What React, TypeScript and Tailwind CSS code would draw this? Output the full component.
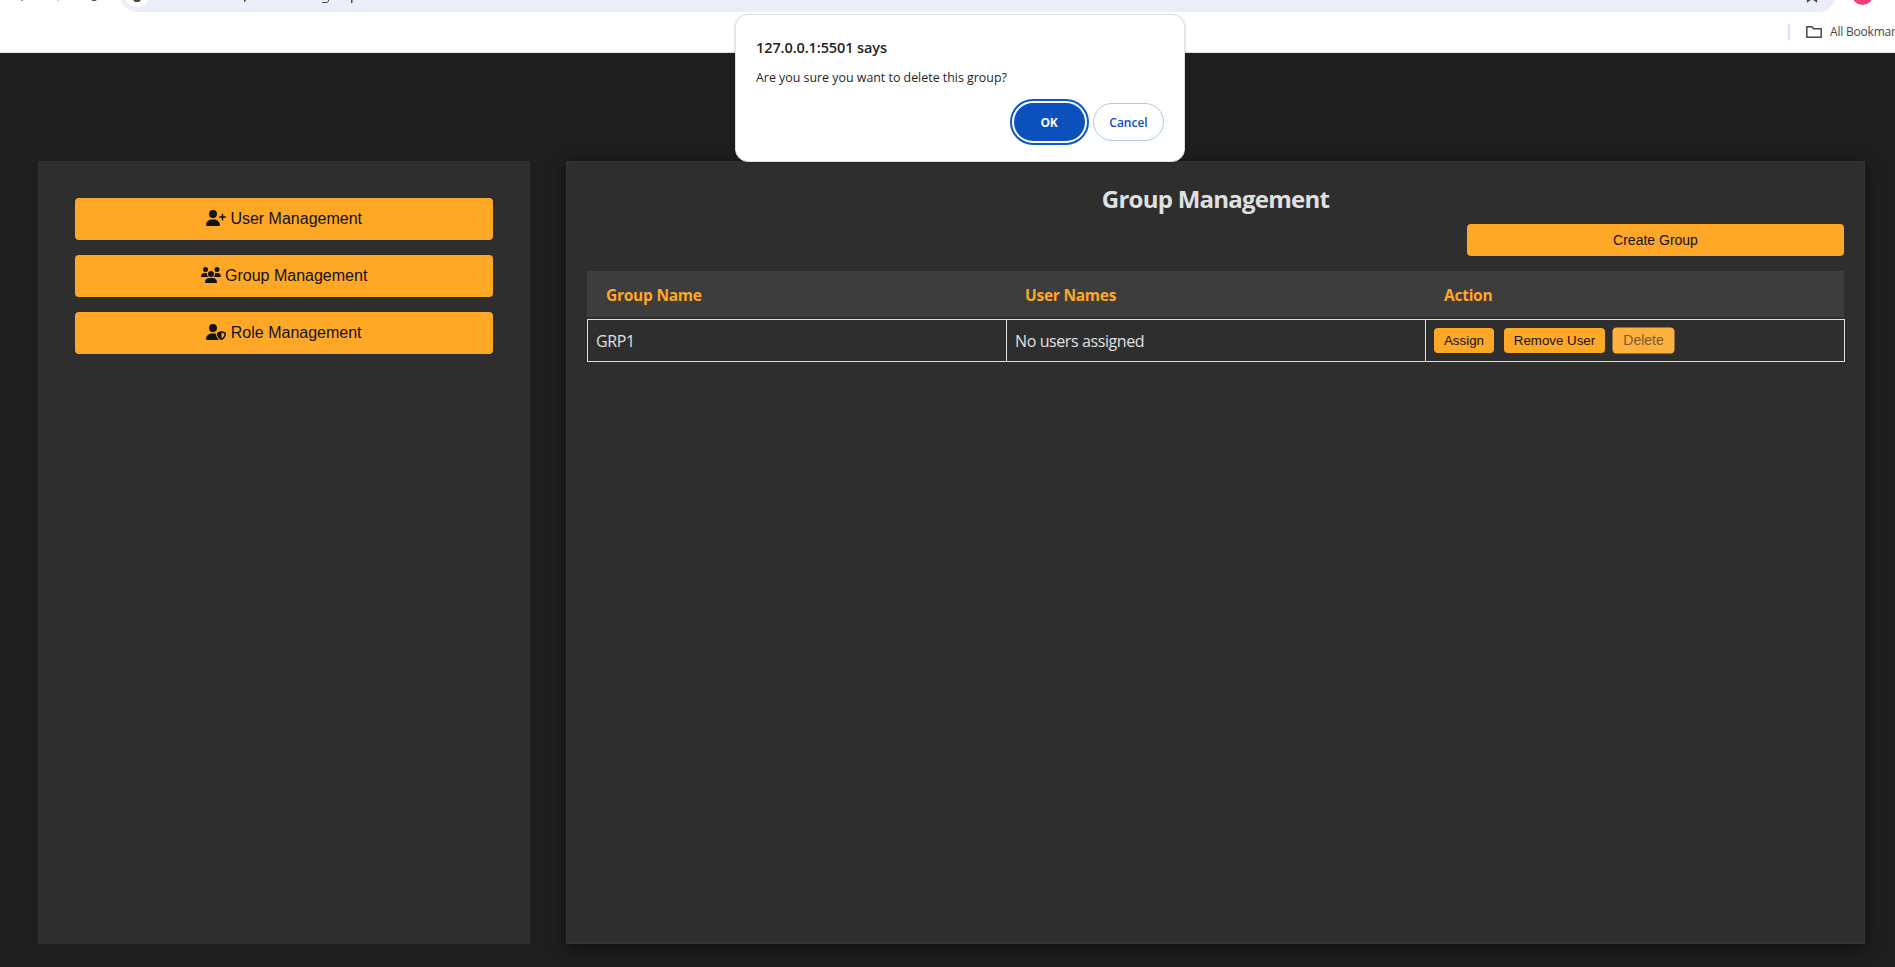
import React from "react";
import { FaUserPlus, FaUserShield } from "react-icons/fa6";

function UsersIcon() {
  return (
    <svg viewBox="0 0 640 512" className="mb-0.5 h-4 w-5" fill="currentColor" aria-hidden="true">
      <path d="M144 0a80 80 0 1 1 0 160A80 80 0 1 1 144 0zM512 0a80 80 0 1 1 0 160A80 80 0 1 1 512 0zM0 298.700C0 239.800 47.800 192 106.700 192h42.700c15.900 0 31 3.500 44.600 9.700c-1.300 7.200-1.900 14.700-1.900 22.300c0 38.200 16.800 72.500 43.300 96c-.2 0-.4 0-.7 0H21.300C9.600 320 0 310.400 0 298.700zM405.300 320c-.2 0-.4 0-.7 0c26.600-23.500 43.300-57.800 43.300-96c0-7.600-.7-15-1.900-22.300c13.600-6.300 28.700-9.700 44.600-9.700h42.700C592.200 192 640 239.800 640 298.700c0 11.800-9.600 21.300-21.300 21.300H405.300zM224 224a96 96 0 1 1 192 0 96 96 0 1 1 -192 0zM128 485.300C128 411.700 187.700 352 261.300 352H378.700C452.300 352 512 411.700 512 485.300c0 14.700-11.900 26.700-26.700 26.700H154.700c-14.700 0-26.700-11.900-26.700-26.700z" />
    </svg>
  );
}

const navItems = [
  { label: "User Management", icon: <FaUserPlus className="mb-0.5 h-4 w-5" /> },
  { label: "Group Management", icon: <UsersIcon /> },
  { label: "Role Management", icon: <FaUserShield className="mb-0.5 h-4 w-5" /> },
];

function BrowserBar() {
  return (
    <header className="relative h-[53px] shrink-0 overflow-hidden border-b border-[#dde3e3] bg-white">
      <div className="absolute left-[120px] top-[-24px] h-9 w-[1716px] rounded-full bg-[#ebeef8]" />
      <div className="absolute left-[124px] top-[-19px] h-[26px] w-[26px] rounded-full bg-white" />
      <div className="absolute left-[1852px] top-[-16px] h-[21px] w-[21px] rounded-full bg-[#ec407a]" />
      <svg className="absolute left-0 top-0 h-3 w-[1895px]" viewBox="0 0 1895 12" fill="#4a4a4a" aria-hidden="true">
        <path d="M21 0h2v1h-2z" opacity=".6" />
        <path d="M57 0h2v1h-2z" opacity=".3" />
        <path d="M91 0h6l-2 1h-2z" />
        <path d="M133 0h8l-2 2h-4z" />
        <path d="M244 0h2l-1 2h-1z" />
        <path d="M327 0h1v1l-1 1h-5v1h5l2-2v-1z" />
        <path d="M351 0h1.500v3h-1.500z" />
        <path d="M1807.500 0v1.500l4.500-3 4.500 3v-1.500" fill="none" stroke="#4a4a4a" strokeWidth="1.300" />
      </svg>
      <div className="absolute right-0 top-6 flex h-4 w-[107px] items-center overflow-hidden border-l-2 border-[#d3e3fd]">
        <svg className="ml-4 h-4 w-4 shrink-0" viewBox="0 0 16 16" fill="none" stroke="#474747" strokeWidth="1.500" aria-hidden="true">
          <path d="M.8 2.800h5l1.800 2h7.600v8.400H.8z" strokeLinejoin="round" />
        </svg>
        <span className="ml-2 whitespace-nowrap font-['Open_Sans',sans-serif] text-[12px] tracking-[-0.2px] text-[#474747]">All Bookmar</span>
      </div>
    </header>
  );
}

function ConfirmDialog() {
  return (
    <div
      role="dialog"
      className="absolute left-[735px] top-[14px] h-[148px] w-[450px] rounded-[13px] border border-[#dfe1e0] bg-white pl-5 pr-5 pt-[23px] font-['Open_Sans',sans-serif] text-[#1f1f1f] shadow-[0_1px_3px_rgba(0,0,0,0.2)]"
    >
      <h1 className="text-[14.500px] font-semibold leading-5 tracking-[-0.1px]">127.0.0.1:5501 says</h1>
      <p className="mt-[12px] text-[12.400px] leading-4">Are you sure you want to delete this group?</p>
      <div className="mt-[17px] flex justify-end gap-2">
        <button className="h-[38px] w-[71px] rounded-full bg-[#0b50bd] pr-px pt-px text-[12px] font-bold tracking-[-0.3px] text-white outline-2 outline-offset-2 outline-[#0b57d0]">OK</button>
        <button className="h-[38px] w-[71px] rounded-full border border-[#a8c7fa] pt-px text-[12px] font-semibold text-[#0b50d0]">Cancel</button>
      </div>
    </div>
  );
}

export default function App() {
  return (
    <div className="relative flex h-[967px] w-[1895px] flex-col overflow-hidden bg-[#1e1e1e]">
      <BrowserBar />
      <main className="flex flex-1 gap-9 pb-[23px] pl-[38px] pr-[30px] pt-[108px]">
        <aside className="flex w-[492px] flex-col gap-[15px] bg-[#2e2e2e] px-[37px] pt-[37px]">
          {navItems.map((item) => (
            <button
              key={item.label}
              className="flex h-[42px] items-center justify-center gap-[4.400px] rounded-[4px] bg-[#ffa726] font-['Liberation_Sans',sans-serif] text-[16px] text-[#121212]"
            >
              {item.icon}
              <span>{item.label}</span>
            </button>
          ))}
        </aside>
        <section className="flex flex-1 flex-col border border-[#333333] bg-[#2e2e2e] px-5 pt-[19px] font-['Open_Sans',sans-serif] text-[#e0e0e0] shadow-[0_4px_15px_rgba(0,0,0,0.5)]">
          <h2 className="text-center text-[24px] font-bold leading-9 tracking-[-0.75px]">Group Management</h2>
          <button className="mt-[7px] h-8 w-[377px] self-end rounded-[4px] bg-[#ffa726] font-['Liberation_Sans',sans-serif] text-[14px] text-[#121212]">
            Create Group
          </button>
          <div className="mt-[15px] grid h-[46px] grid-cols-[419px_419px_419px] items-center bg-[#3d3d3d] pt-1 text-[15.500px] font-bold tracking-[-0.25px] text-[#ffa726]">
            <span className="pl-[19px]">Group Name</span>
            <span className="pl-[19px]">User Names</span>
            <span className="pl-[19px]">Action</span>
          </div>
          <div className="mr-[-1px] mt-[2px] grid h-[43px] grid-cols-[419px_419px_1fr] divide-x divide-[#e0e0e0] border border-[#e0e0e0] text-[16px] tracking-[-0.4px]">
            <div className="flex items-center pl-2">GRP1</div>
            <div className="flex items-center pl-2">No users assigned</div>
            <div className="flex items-start pl-2 pt-2 font-['Liberation_Sans',sans-serif] text-[13.333px] tracking-normal text-[#121212]">
              <button className="h-[25px] w-[60px] rounded-[4px] bg-[#ffa726]">Assign</button>
              <button className="ml-[10px] h-[25px] w-[101px] rounded-[4px] bg-[#ffa726]">Remove User</button>
              <button className="ml-[9px] h-[25px] w-[59px] scale-105 rounded-[4px] bg-[#ffb13f] text-[#7c5a2b]">Delete</button>
            </div>
          </div>
        </section>
      </main>
      <ConfirmDialog />
    </div>
  );
}
